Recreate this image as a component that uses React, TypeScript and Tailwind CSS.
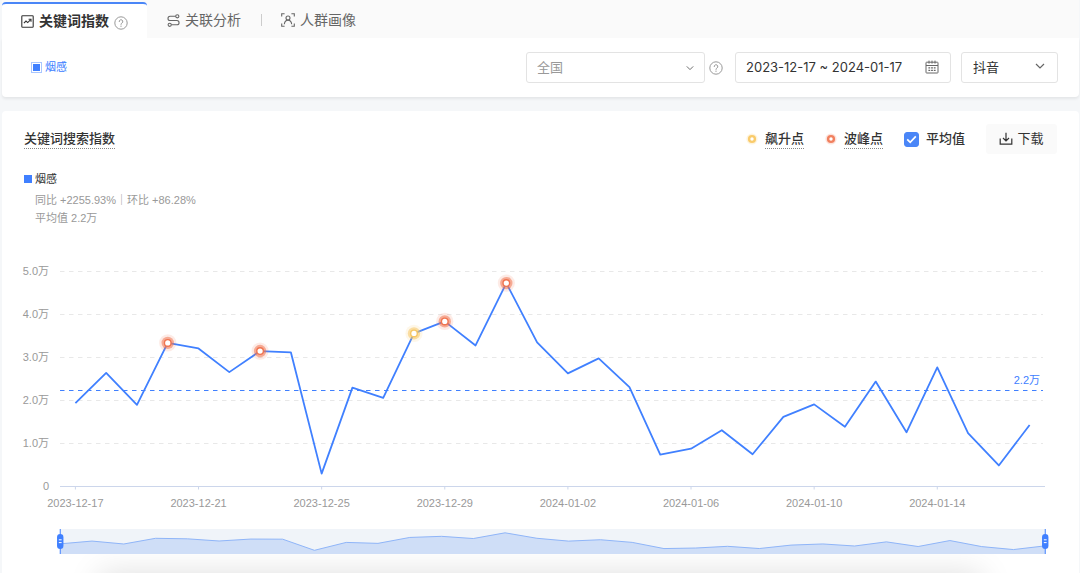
import React, { useState } from "react";

const VALUES = [
  1.94, 2.64, 1.9, 3.34, 3.21, 2.66, 3.15, 3.12, 0.3, 2.3, 2.06, 3.56, 3.84, 3.28, 4.73, 3.35,
  2.63, 2.98, 2.31, 0.74, 0.88, 1.31, 0.75, 1.62, 1.91, 1.39, 2.44, 1.26, 2.77, 1.24, 0.49, 1.43,
];
const AXIS_DATES = [
  "2023-12-17", "2023-12-21", "2023-12-25", "2023-12-29",
  "2024-01-02", "2024-01-06", "2024-01-10", "2024-01-14",
];
const PEAKS = [3, 6, 12, 14];
const SURGES = [11];
const AVERAGE = 2.23;

const PLOT_LEFT = 58;
const PLOT_WIDTH = 985;
const BASELINE = 236.5;
const UNIT = 43;
const BAND = PLOT_WIDTH / VALUES.length;

const px = (i: number) => PLOT_LEFT + BAND * (i + 0.5);
const py = (v: number) => BASELINE - UNIT * v;

function HelpIcon() {
  return (
    <svg className="size-[14px] shrink-0 text-[#999999]" viewBox="0 0 14 14" fill="none" stroke="currentColor" aria-hidden="true">
      <circle cx="7" cy="7" r="6.2" />
      <path d="M5.2 5.6a1.8 1.8 0 1 1 2.7 1.5c-.6.35-.9.65-.9 1.3" strokeLinecap="round" />
      <circle cx="7" cy="10.2" r=".65" fill="currentColor" stroke="none" />
    </svg>
  );
}

function TrendIcon() {
  return (
    <svg className="size-[13px] shrink-0" viewBox="0 0 13 13" fill="none" stroke="currentColor" strokeWidth="1.1" aria-hidden="true">
      <rect x=".8" y=".8" width="11.4" height="11.4" rx=".8" />
      <path d="M2.9 8.2 5 6l1.7 1.6 3-3" />
      <path d="M7.6 4.3H10v2.4" />
    </svg>
  );
}

function RelationIcon() {
  return (
    <svg className="size-[13px] shrink-0" viewBox="0 0 13 13" fill="none" stroke="currentColor" strokeWidth="1.1" aria-hidden="true">
      <path d="M8.7 2.3H3.1a2.1 2.1 0 0 0 0 4.2h6.8a2.1 2.1 0 0 1 0 4.3H4.3" />
      <circle cx="10.3" cy="2.3" r="1.6" />
      <circle cx="2.7" cy="10.8" r="1.6" />
    </svg>
  );
}

function AudienceIcon() {
  return (
    <svg className="size-[14px] shrink-0" viewBox="0 0 14 14" fill="none" stroke="currentColor" strokeWidth="1.1" aria-hidden="true">
      <path d="M.7 3.6V.7h2.9M10.4.7h2.9v2.9M13.3 10.4v2.9h-2.9M3.6 13.3H.7v-2.9" />
      <circle cx="7" cy="5" r="2" />
      <path d="M3.3 11.2C3.6 8.6 5 7.2 7 7.2s3.4 1.4 3.7 4" />
    </svg>
  );
}

function CalendarIcon() {
  return (
    <svg className="mb-[2px] size-[14px] shrink-0 text-[#666666]" viewBox="0 0 14 14" fill="none" stroke="currentColor" aria-hidden="true">
      <rect x="1" y="2.2" width="12" height="10.8" rx=".6" />
      <path d="M1 5.5h12M4 .6v3M7 .6v3M10 .6v3" />
      <path d="M3.4 7.8h1.8M6.1 7.8h1.8M8.8 7.8h1.8M3.4 10.3h1.8M6.1 10.3h1.8M8.8 10.3h1.8" strokeWidth="1.2" />
    </svg>
  );
}

function Chevron({ className }: { className: string }) {
  return (
    <svg className={className} viewBox="0 0 10 10" fill="none" stroke="currentColor" strokeWidth="1.2" aria-hidden="true">
      <path d="M1 3l4 4 4-4" />
    </svg>
  );
}

function DownloadIcon() {
  return (
    <svg className="size-[14px] shrink-0" viewBox="0 0 14 14" fill="none" stroke="currentColor" strokeWidth="1.2" aria-hidden="true">
      <path d="M1.2 6.6v5.6h11.6V6.6M7 .8v8M4 6l3 3 3-3" />
    </svg>
  );
}

function Dot({ color }: { color: string }) {
  return (
    <svg className="size-[12px] shrink-0" viewBox="0 0 12 12" aria-hidden="true">
      <circle cx="6" cy="6" r="5.6" fill={color} opacity=".2" />
      <circle cx="6" cy="6" r="4.1" fill={color} opacity=".9" />
      <circle cx="6" cy="6" r="1.7" fill="#fff" />
    </svg>
  );
}

function Marker({ index, color }: { index: number; color: string }) {
  const cx = px(index);
  const cy = py(VALUES[index]);
  return (
    <g>
      <circle cx={cx} cy={cy} r="8.6" fill={color} opacity=".14" />
      <circle cx={cx} cy={cy} r="6.2" fill={color} opacity=".55" />
      <circle cx={cx} cy={cy} r="4" fill={color} />
      <circle cx={cx} cy={cy} r="2.6" fill="#fff" />
    </g>
  );
}

function TrendChart({ showAverage }: { showAverage: boolean }) {
  const line = VALUES.map((v, i) => `${px(i)},${py(v)}`).join(" ");
  const right = PLOT_LEFT + PLOT_WIDTH;
  return (
    <svg className="block w-full font-['Liberation_Sans','Noto_Sans_CJK_SC',sans-serif] text-[11px]" viewBox="0 0 1077 279" role="img" aria-label="关键词搜索指数">
      {[5, 4, 3, 2, 1, 0].map((v) => (
        <g key={v}>
          {v > 0 && (
            <line x1={PLOT_LEFT} x2={right - 2} y1={py(v)} y2={py(v)} stroke="#e8e8e8" strokeDasharray="4.5 4.5" />
          )}
          <text x="47" y={py(v) + 3.5} textAnchor="end" fill="#999999">
            {v === 0 ? "0" : `${v}.0万`}
          </text>
        </g>
      ))}
      <line x1={PLOT_LEFT} x2={right} y1={BASELINE} y2={BASELINE} stroke="#ccd6eb" />
      {AXIS_DATES.map((d, i) => (
        <g key={d}>
          <line x1={px(i * 4)} x2={px(i * 4)} y1={BASELINE} y2={BASELINE + 3} stroke="#ccd6eb" />
          <text x={px(i * 4)} y="257" textAnchor="middle" fill="#999999">{d}</text>
        </g>
      ))}
      {showAverage && (
        <g>
          <line x1={PLOT_LEFT} x2={right - 2} y1={140.5} y2={140.5} stroke="#4080ff" strokeDasharray="4.5 4.5" />
          <text x="1038" y={py(AVERAGE) - 7} textAnchor="end" fill="#4080ff">2.2万</text>
        </g>
      )}
      <polyline points={line} fill="none" stroke="#4080ff" strokeWidth="1.8" strokeLinejoin="round" />
      {PEAKS.map((i) => <Marker key={i} index={i} color="#f07450" />)}
      {SURGES.map((i) => <Marker key={i} index={i} color="#f6c765" />)}
    </svg>
  );
}

const rangeInput =
  "pointer-events-none absolute inset-0 m-0 h-full w-full appearance-none opacity-0 [&::-webkit-slider-thumb]:pointer-events-auto";

function Handle({ x }: { x: number }) {
  return (
    <g>
      <line x1={x} x2={x} y1="0" y2="25" stroke="#4080ff" />
      <rect x={x - 3.2} y="5" width="6.4" height="15" rx="3.2" fill="#4080ff" />
      <path d={`M${x - 1.4} 10.8h2.8M${x - 1.4} 13.6h2.8`} stroke="#fff" />
    </g>
  );
}

function RangeNavigator() {
  const last = VALUES.length - 1;
  const [start, setStart] = useState(0);
  const [end, setEnd] = useState(last);
  const step = PLOT_WIDTH / last;
  const points = VALUES.map((v, i) => `${i * step},${22.5 - v * 3.95}`).join(" ");
  return (
    <div className="relative mr-[3.1%] ml-[5.4%]">
      <svg className="block w-full overflow-visible" viewBox="0 0 985 25" aria-hidden="true">
        <rect width="985" height="25" fill="#f0f4f9" />
        <polygon points={`0,25 ${points} 985,25`} fill="#cfdef7" />
        <polyline points={points} fill="none" stroke="#8fb5f8" />
        <Handle x={start * step} />
        <Handle x={end * step} />
      </svg>
      <input type="range" aria-label="开始日期" min={0} max={last} value={start} className={rangeInput}
        onChange={(e) => setStart(Math.min(Number(e.target.value), end - 1))} />
      <input type="range" aria-label="结束日期" min={0} max={last} value={end} className={rangeInput}
        onChange={(e) => setEnd(Math.max(Number(e.target.value), start + 1))} />
    </div>
  );
}

export default function App() {
  const [showAverage, setShowAverage] = useState(true);
  return (
    <div className="bg-[#f5f7f9] pr-px pl-[2px] font-['Liberation_Sans','Noto_Sans_CJK_SC',sans-serif] text-[13px] text-[#333333]">
      <nav className="flex h-[38px] items-stretch bg-[#fafafa] pt-[2px] text-[14px] text-[#666666]" role="tablist">
        <button role="tab" aria-selected="true" className="flex w-[145px] items-center rounded-t border-t-2 border-[#4a86f7] bg-white pl-[19px] text-[#333333]">
          <TrendIcon />
          <span className="ml-[5px] font-bold">关键词指数</span>
          <span className="ml-[5px] pt-[3px]"><HelpIcon /></span>
        </button>
        <button role="tab" aria-selected="false" className="flex items-center gap-[5px] pr-5 pl-5">
          <RelationIcon />
          关联分析
        </button>
        <span className="h-3 w-px self-center bg-[#cccccc]" />
        <button role="tab" aria-selected="false" className="flex items-center gap-[5px] pl-[19px]">
          <AudienceIcon />
          人群画像
        </button>
      </nav>

      <section className="flex h-[59px] items-center justify-between rounded-b bg-white pr-[21px] pl-[29px] shadow-[0_2px_3px_rgba(0,0,0,0.07)]">
        <span className="flex items-center gap-[3px] text-[11px] text-[#4080ff]">
          <span className="size-[11px] border border-[#a9c6ff] bg-[#4080ff] shadow-[inset_0_0_0_1px_#fff]" />
          烟感
        </span>
        <div className="flex items-center">
          <div className="relative">
            <select aria-label="地区" className="h-[31px] w-[179px] appearance-none rounded-[3px] border border-[#e3e3e3] bg-white pl-[10px] text-[#999999]">
              <option>全国</option>
            </select>
            <Chevron className="pointer-events-none absolute top-3 right-[11px] size-2 text-[#666666]" />
          </div>
          <span className="mr-3 ml-1"><HelpIcon /></span>
          <div className="flex h-[31px] w-[216px] items-center rounded-[3px] border border-[#e3e3e3] pr-[11px] pl-[10px]">
            <input aria-label="日期范围" defaultValue="2023-12-17 ~ 2024-01-17" className="min-w-0 flex-1 bg-transparent font-['Inter',sans-serif] text-[13px] outline-none" />
            <CalendarIcon />
          </div>
          <div className="relative ml-[10px]">
            <select aria-label="平台" className="h-[31px] w-[97px] appearance-none rounded-[3px] border border-[#e3e3e3] bg-white pl-[11px] text-[#333333]">
              <option>抖音</option>
            </select>
            <Chevron className="pointer-events-none absolute top-[9px] right-[13px] size-[10px] text-[#666666]" />
          </div>
        </div>
      </section>

      <main className="mt-[14px] rounded-t bg-white pt-[13px]">
        <header className="flex h-[30px] items-center justify-between pr-[22px] pl-[22px]">
          <h2 className="border-b border-dotted border-[#888888] leading-[18px] font-medium">关键词搜索指数</h2>
          <div className="flex items-center">
            <Dot color="#f8c75e" />
            <span className="ml-[7px] border-b border-dotted border-[#888888] leading-[18px] font-medium">飙升点</span>
            <span className="ml-[21px] flex"><Dot color="#f07450" /></span>
            <span className="ml-[7px] border-b border-dotted border-[#888888] leading-[18px] font-medium">波峰点</span>
            <label className="ml-[21px] flex items-center gap-[7px] font-medium">
              <span className="relative flex">
                <input type="checkbox" checked={showAverage} onChange={(e) => setShowAverage(e.target.checked)}
                  className="peer size-[15px] appearance-none rounded-[3px] border border-[#4a86f7] bg-white checked:bg-[#4a86f7]" />
                <svg className="pointer-events-none absolute inset-0 size-[15px]" viewBox="0 0 15 15" fill="none" stroke="#fff" strokeWidth="1.7" aria-hidden="true">
                  <path d="M3.2 7.4l3 3 5.6-6" />
                </svg>
              </span>
              平均值
            </label>
            <button className="ml-[21px] flex h-[30px] w-[71px] items-center justify-center gap-1 rounded-[3px] bg-[#fafafa]">
              <DownloadIcon />
              下载
            </button>
          </div>
        </header>

        <div className="mt-4 mb-[23px] pl-[22px] text-[11px] leading-[18px]">
          <div className="flex items-center gap-[3px]">
            <span className="size-2 bg-[#4080ff]" />
            烟感
          </div>
          <div className="mt-[3px] pl-[11px] text-[#999999]">
            <p>同比 +2255.93%｜环比 +86.28%</p>
            <p>平均值 2.2万</p>
          </div>
        </div>

        <TrendChart showAverage={showAverage} />
        <RangeNavigator />
        <div className="relative h-[19px] overflow-hidden">
          <div className="absolute top-full right-[9%] left-[9%] h-10 shadow-[0_0_32px_rgba(0,0,0,0.13)]" />
        </div>
      </main>
    </div>
  );
}
